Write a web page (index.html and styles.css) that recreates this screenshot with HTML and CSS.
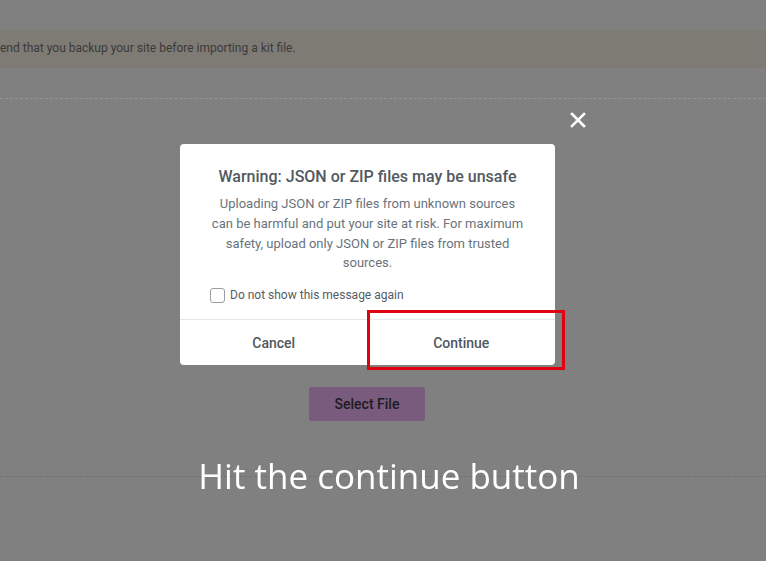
FILE: index.html
```html
<!DOCTYPE html>
<html lang="en">
<head>
<meta charset="utf-8">
<title>Import Kit</title>
<link rel="stylesheet" href="styles.css">
</head>
<body>
<div class="page">
  <div class="notice">end that you backup your site before importing a kit file.</div>
  <div class="dropzone">
    <button class="select-btn">Select File</button>
  </div>
</div>

<div class="overlay">
  <button class="close" aria-label="Close">
    <svg width="16" height="16" viewBox="0 0 16 16"><path d="M2 2L14 14M14 2L2 14" stroke="#fff" stroke-width="2.6" stroke-linecap="square"/></svg>
  </button>

  <div class="modal">
    <div class="modal-body">
      <h2 class="modal-title">Warning: JSON or ZIP files may be unsafe</h2>
      <p class="modal-text">Uploading JSON or ZIP files from unknown sources can be harmful and put your site at risk. For maximum safety, upload only JSON or ZIP files from trusted sources.</p>
      <label class="check-row"><span class="checkbox"></span><span>Do not show this message again</span></label>
    </div>
    <div class="modal-footer">
      <button class="foot-btn">Cancel</button>
      <button class="foot-btn">Continue</button>
    </div>
  </div>

  <div class="highlight"></div>

  <div class="caption">Hit the continue button</div>
</div>
</body>
</html>
```

FILE: styles.css
```css
html, body {
  margin: 0;
  padding: 0;
  background: #808080;
  font-family: Roboto, "Liberation Sans", sans-serif;
  overflow: hidden;
}

.page {
  width: 766px;
  height: 561px;
  padding-top: 30px;
  box-sizing: border-box;
}

.notice {
  height: 38px;
  line-height: 37px;
  background: #7e7b74;
  color: #3a3a3a;
  font-size: 12px;
  white-space: nowrap;
}

.dropzone {
  margin-top: 30px;
  height: 379px;
  border-top: 1px dashed #959595;
  border-bottom: 1px dashed #727272;
  display: flex;
  justify-content: center;
  align-items: flex-start;
  padding-top: 288px;
  box-sizing: border-box;
  padding-right: 32px;
}

.select-btn {
  width: 116px;
  height: 34px;
  border: none;
  border-radius: 2px;
  background: #795b7e;
  color: #1c1c22;
  font-family: Roboto, "Liberation Sans", sans-serif;
  font-size: 14px;
  font-weight: 500;
  padding: 0;
}

.overlay {
  position: fixed;
  inset: 0;
}

.close {
  position: absolute;
  left: 570px;
  top: 112px;
  width: 16px;
  height: 16px;
  padding: 0;
  border: none;
  background: none;
  display: flex;
}

.modal {
  position: absolute;
  left: 180px;
  top: 144px;
  width: 375px;
  height: 221px;
  background: #fff;
  border-radius: 4px;
  display: flex;
  flex-direction: column;
}

.modal-body {
  padding: 23px 30px 0;
  text-align: center;
  height: 176px;
  box-sizing: border-box;
  border-bottom: 1px solid #e6e8ea;
}

.modal-title {
  margin: 0;
  font-size: 16px;
  line-height: 20px;
  font-weight: 500;
  color: #52595f;
}

.modal-text {
  margin: 7px 0 0;
  font-size: 13px;
  line-height: 19.8px;
  color: #6a737c;
}

.check-row {
  margin-top: 14px;
  display: flex;
  align-items: center;
  gap: 5px;
  font-size: 12px;
  line-height: 16px;
  color: #555c63;
}

.checkbox {
  width: 13px;
  height: 13px;
  border: 1px solid #9a9ea3;
  border-radius: 3px;
  box-sizing: content-box;
}

.modal-footer {
  flex: 1;
  display: grid;
  grid-template-columns: 1fr 1fr;
}

.foot-btn {
  border: none;
  background: none;
  font-family: Roboto, "Liberation Sans", sans-serif;
  font-size: 14px;
  font-weight: 500;
  color: #50575e;
  padding: 0;
}

.highlight {
  position: absolute;
  left: 367px;
  top: 310px;
  width: 198px;
  height: 60px;
  border: 3px solid #e00010;
  box-sizing: border-box;
}

.caption {
  position: absolute;
  left: 0;
  top: 453px;
  width: 778px;
  text-align: center;
  font-family: "Open Sans", Lato, sans-serif;
  font-size: 35px;
  line-height: 46px;
  color: #fff;
}
```
